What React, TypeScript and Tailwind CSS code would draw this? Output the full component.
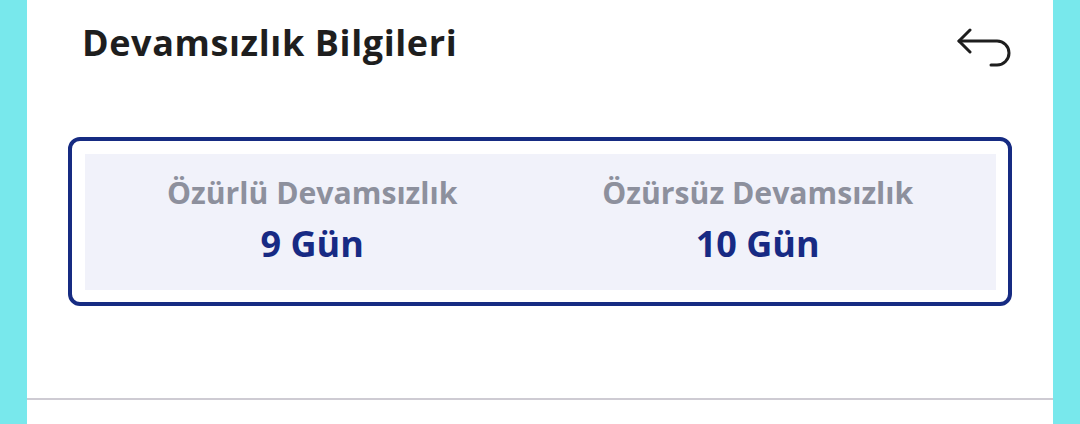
import React from "react";

export default function App() {
  return (
    <div className="flex h-[424px] w-[1080px] overflow-hidden bg-[#78e8ec]" style={{ fontFamily: '"Open Sans", "Noto Sans", sans-serif' }}>
      <div className="ml-[27px] flex h-full w-[1026px] flex-col bg-white">
        <div className="flex items-start justify-between pl-[55px] pr-[40px] pt-[21px]">
          <h1 className="text-[36px] font-bold leading-[44px] tracking-[0.6px] text-[#1e1e1e]">Devamsızlık Bilgileri</h1>
          <svg width="56" height="40" viewBox="0 0 56 40" className="mt-[7px]" fill="none" stroke="#1e1e1e" strokeWidth="3" strokeLinecap="round" strokeLinejoin="round">
            <path d="M13 2 L2 13 L13 24" />
            <path d="M2 13 H40 A12 12 0 0 1 40 37 H34" />
          </svg>
        </div>
        <div className="mx-[41px] mt-[69px] rounded-[12px] border-[4.5px] border-[#162b82] p-[12.5px]">
          <div className="grid h-[136px] grid-cols-2 bg-[#f1f2fa]">
            <div className="flex flex-col items-center pt-[20px]">
              <div className="text-[30.2px] font-bold leading-[38px] text-[#8d909d]">Özürlü Devamsızlık</div>
              <div className="mt-[12px] text-[36px] font-bold leading-[40px] text-[#172a84]">9 Gün</div>
            </div>
            <div className="flex flex-col items-center pr-[20px] pt-[20px]">
              <div className="text-[30.2px] font-bold leading-[38px] text-[#8d909d]">Özürsüz Devamsızlık</div>
              <div className="mt-[12px] text-[36px] font-bold leading-[40px] text-[#172a84]">10 Gün</div>
            </div>
          </div>
        </div>
        <div className="mt-auto mb-[24px] h-[2px] bg-[#cecbd3]" />
      </div>
    </div>
  );
}
